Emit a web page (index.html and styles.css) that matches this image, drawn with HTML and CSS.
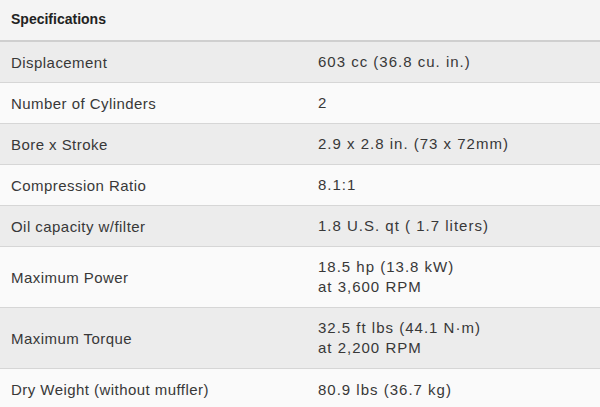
FILE: index.html
```html
<!DOCTYPE html>
<html>
<head>
<meta charset="utf-8">
<link rel="stylesheet" href="styles.css">
</head>
<body>
<div class="specs">
  <div class="head">Specifications</div>
  <div class="row alt"><div class="label">Displacement</div><div class="value">603 cc (36.8 cu. in.)</div></div>
  <div class="row"><div class="label">Number of Cylinders</div><div class="value">2</div></div>
  <div class="row alt"><div class="label">Bore x Stroke</div><div class="value">2.9 x 2.8 in. (73 x 72mm)</div></div>
  <div class="row"><div class="label">Compression Ratio</div><div class="value">8.1:1</div></div>
  <div class="row alt"><div class="label">Oil capacity w/filter</div><div class="value">1.8 U.S. qt ( 1.7 liters)</div></div>
  <div class="row tall"><div class="label">Maximum Power</div><div class="value">18.5 hp (13.8 kW)<br>at 3,600 RPM</div></div>
  <div class="row alt tall"><div class="label">Maximum Torque</div><div class="value">32.5 ft lbs (44.1 N·m)<br>at 2,200 RPM</div></div>
  <div class="row last"><div class="label">Dry Weight (without muffler)</div><div class="value">80.9 lbs (36.7 kg)</div></div>
</div>
</body>
</html>
```
FILE: styles.css
```css
html, body {
  margin: 0;
  padding: 0;
  background: #fafafa;
}
.specs {
  width: 600px;
  height: 407px;
  overflow: hidden;
  font-family: "Liberation Sans", Arial, sans-serif;
  color: #383838;
  font-size: 15px;
}
.head {
  height: 42px;
  box-sizing: border-box;
  padding: 11px 0 0 11px;
  background: #f4f4f4;
  font-weight: bold;
  font-size: 14px;
  color: #222;
  border-bottom: 2px solid #cfcfcf;
}
.row {
  display: grid;
  grid-template-columns: 307px 1fr;
  align-items: center;
  height: 41px;
  box-sizing: border-box;
  border-bottom: 1px solid #d6d6d6;
  background: #fafafa;
}
.row.alt {
  background: #ececec;
}
.row.tall {
  height: 61px;
}
.row.last {
  border-bottom: none;
}
.label {
  padding-left: 11px;
  letter-spacing: 0.45px;
}
.value {
  padding-left: 11px;
  line-height: 20px;
  letter-spacing: 1px;
}
```
